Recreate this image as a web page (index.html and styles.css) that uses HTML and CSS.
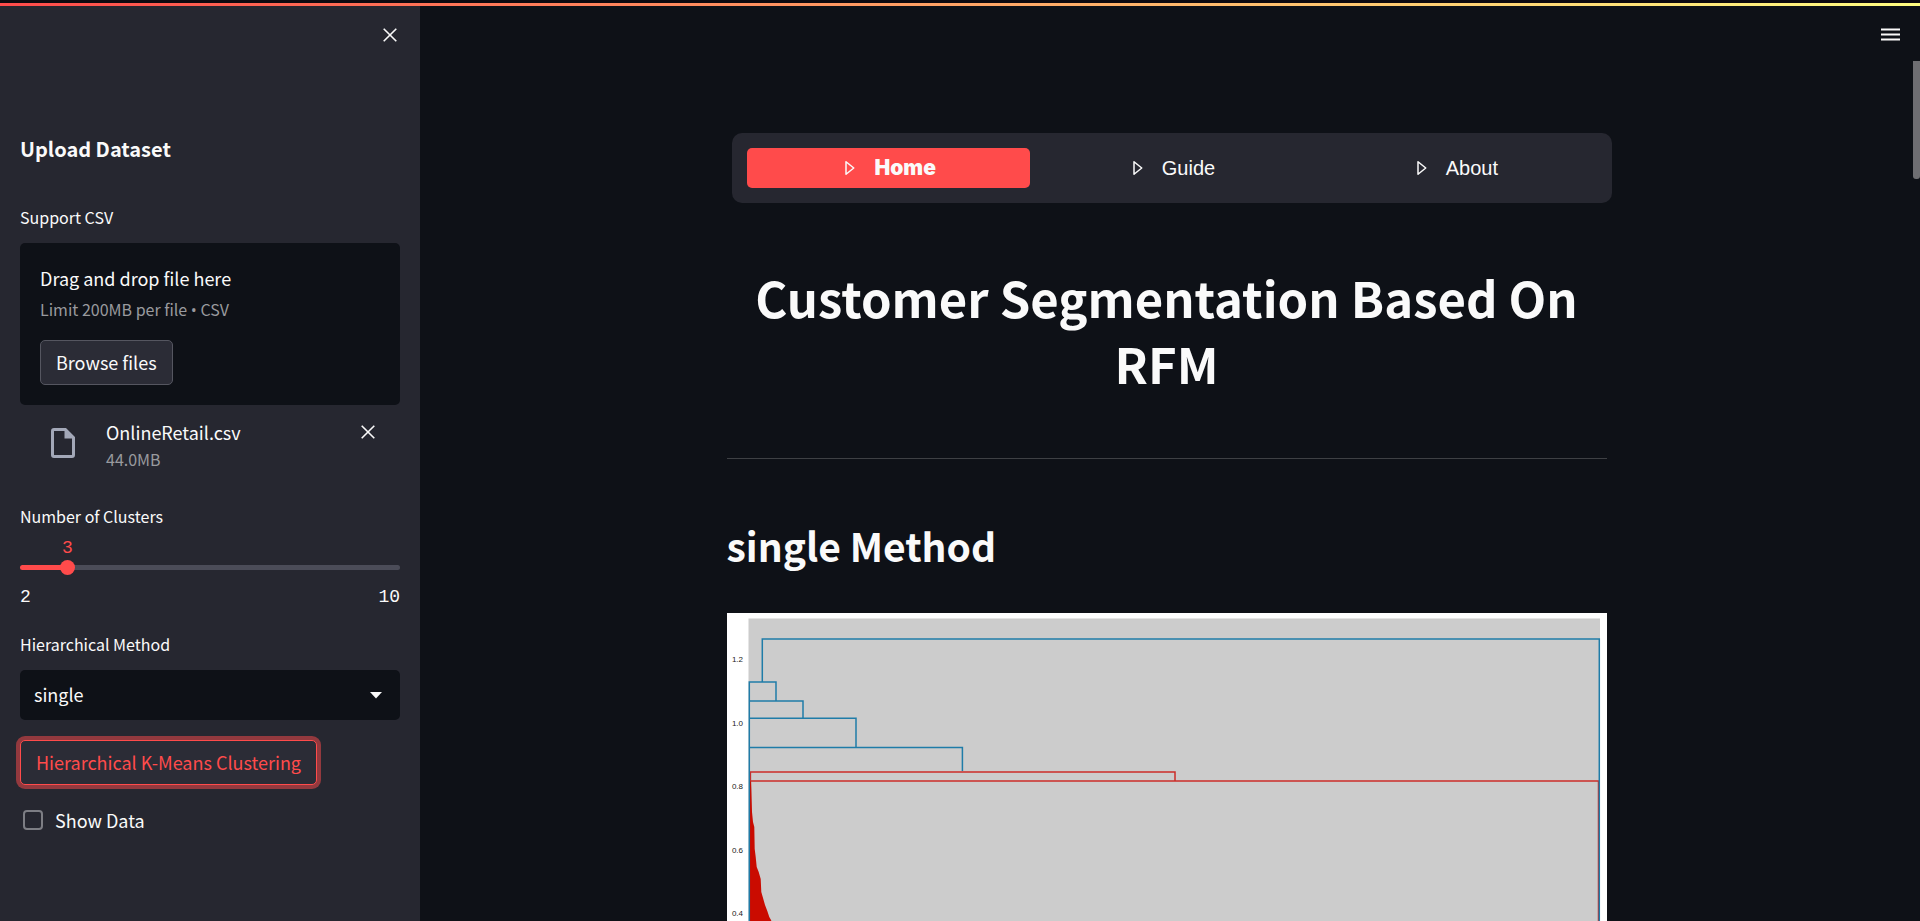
FILE: index.html
```html
<!DOCTYPE html>
<html lang="en">
<head>
<meta charset="utf-8">
<meta name="viewport" content="width=device-width, initial-scale=1">
<title>Customer Segmentation</title>
<link rel="stylesheet" href="styles.css">
</head>
<body>
<div class="decoration"></div>
<div class="app">
  <aside class="sidebar">
    <div class="sidebar-top">
      <button class="icon-button" type="button" aria-label="Close sidebar">
        <svg class="cross" viewBox="0 0 14 14" aria-hidden="true"><path d="M.7.7l12.6 12.6M13.3.7L.7 13.3"/></svg>
      </button>
    </div>
    <h2 class="sidebar-title">Upload Dataset</h2>

    <section class="field">
      <span class="label" id="upload-label">Support CSV</span>
      <div class="dropzone" role="group" aria-labelledby="upload-label">
        <span class="text">Drag and drop file here</span>
        <span class="hint">Limit 200MB per file <span class="bullet">•</span> CSV</span>
        <button class="button" type="button">Browse files</button>
      </div>
      <div class="file">
        <svg class="file-icon" viewBox="0 0 24 30" aria-hidden="true"><path fill-rule="evenodd" d="M3 0h12l9 9v18a3 3 0 0 1-3 3H3a3 3 0 0 1-3-3V3a3 3 0 0 1 3-3zm0 3v24h18V10.500h-7.500V3z"/></svg>
        <div class="file-info">
          <span class="text">OnlineRetail.csv</span>
          <span class="hint">44.0MB</span>
        </div>
        <button class="icon-button" type="button" aria-label="Remove file">
          <svg class="cross" viewBox="0 0 14 14" aria-hidden="true"><path d="M.7.7l12.6 12.6M13.3.7L.7 13.3"/></svg>
        </button>
      </div>
    </section>

    <section class="field slider" style="--value: 12.5%">
      <label class="label" for="clusters">Number of Clusters</label>
      <output class="slider-value" for="clusters">3</output>
      <div class="slider-track"><input class="range" id="clusters" type="range" min="2" max="10" value="3"></div>
      <div class="slider-ends"><span>2</span><span>10</span></div>
    </section>

    <section class="field method">
      <label class="label" for="method">Hierarchical Method</label>
      <div class="select-box">
        <select class="select" id="method"><option>single</option></select>
        <svg class="caret" viewBox="0 0 12 7" aria-hidden="true"><path d="M0 0h12L6 6.500z"/></svg>
      </div>
    </section>

    <button class="button button-active" type="button">Hierarchical K-Means Clustering</button>
    <label class="check"><input class="checkbox" type="checkbox">Show Data</label>
  </aside>

  <main class="main">
    <div class="content">
      <nav class="tabs">
        <a class="tab tab-active" href="#home"><svg class="play" viewBox="0 0 16 16" aria-hidden="true"><path d="M4.800 3v10l6.200-5z"/></svg>Home</a>
        <a class="tab" href="#guide"><svg class="play" viewBox="0 0 16 16" aria-hidden="true"><path d="M4.800 3v10l6.200-5z"/></svg>Guide</a>
        <a class="tab" href="#about"><svg class="play" viewBox="0 0 16 16" aria-hidden="true"><path d="M4.800 3v10l6.200-5z"/></svg>About</a>
      </nav>
      <h1 class="title">Customer Segmentation Based On RFM</h1>
      <hr class="rule">
      <h2 class="heading">single Method</h2>
      <svg class="chart" viewBox="0 0 880 440" role="img" aria-label="Dendrogram, single linkage">
        <rect class="paper" width="880" height="440"/>
        <rect class="plot" x="21.500" y="5.500" width="851.500" height="428"/>
        <g class="ticks">
          <text x="16" y="49">1.2</text>
          <text x="16" y="113">1.0</text>
          <text x="16" y="176">0.8</text>
          <text x="16" y="240">0.6</text>
          <text x="16" y="303">0.4</text>
        </g>
        <path class="link-red" d="M23.400 434V159H448V168M23.400 168H871.500V434"/>
        <path class="mass" d="M23 168L24 169 24.300 176 25 199 26 209 27.300 214 27.700 236 28.700 244 29.700 254 31.700 259 33.700 266 34.300 279 36.300 286 38 292 40.300 298 42.300 304 44 307 56 340 90 380 180 410 400 425 860 434H23z"/>
        <path class="link-blue" d="M35.300 69V26H872.300V434M22.300 434V69H49V88M22.300 88H76V105.300M22.300 105.300H129V134.400M22.300 134.400H235.400V158"/>
      </svg>
    </div>
  </main>
</div>
<button class="menu-button" type="button" aria-label="Main menu">
  <svg class="menu-icon" viewBox="0 0 19 14" aria-hidden="true"><path d="M0 1.500h19M0 6.500h19M0 11.500h19"/></svg>
</button>
<div class="scroll-thumb"></div>
</body>
</html>
```

FILE: styles.css
```css
:root {
  --bg: #0e1117;
  --panel: #262730;
  --text: #fafafa;
  --muted: #999a9e;
  --accent: #ff4b4b;
}

* { box-sizing: border-box; }

body {
  margin: 0;
  height: 100vh;
  overflow: hidden;
  background: var(--bg);
  color: var(--text);
  font: 18px/30px "Noto Sans CJK SC", "Open Sans", sans-serif;
}

button, input, select { font: inherit; color: inherit; margin: 0; }

.decoration {
  position: absolute;
  inset: 0 0 auto;
  z-index: 2;
  height: 6px;
  border-top: 3px solid #0d0a10;
  background: linear-gradient(90deg, #ff4b4b, #fffd80) padding-box;
}

.app { display: flex; height: 100%; }

/* Sidebar */
.sidebar {
  flex: 0 0 420px;
  display: flex;
  flex-direction: column;
  align-items: stretch;
  padding: 20px;
  background: var(--panel);
  overflow: hidden;
}

.sidebar-top { display: flex; justify-content: flex-end; height: 115px; }

.icon-button {
  display: grid;
  place-items: center;
  width: 30px;
  height: 30px;
  padding: 0;
  border: 0;
  background: none;
}

.sidebar-top .icon-button { margin-right: -5px; }

.cross { width: 14px; height: 14px; fill: none; stroke: var(--text); stroke-width: 1.6; }

.sidebar-title {
  margin: 0 0 43px;
  font-size: 20px;
  line-height: 27px;
  font-weight: 700;
}

.field { display: flex; flex-direction: column; }

.label { margin-bottom: 14px; font-size: 16px; line-height: 24px; }

.dropzone {
  display: flex;
  flex-direction: column;
  align-items: flex-start;
  padding: 20px;
  border-radius: 5px;
  background: var(--bg);
}

.hint { font-size: 16px; line-height: 24px; color: var(--muted); }

.dropzone .hint { margin: 4px 0 19px; }

.bullet { font-family: "Open Sans", sans-serif; line-height: 1; }

.button {
  align-self: flex-start;
  height: 45px;
  padding: 0 15px 2px;
  border: 1px solid #555660;
  border-radius: 5px;
  background: #2b2c36;
  line-height: 30px;
}

.file { display: flex; align-items: flex-start; padding: 12px 15px 0 31px; }

.file-icon { width: 24px; height: 30px; margin: 11px 31px 0 0; fill: #a3a8b8; }

.file-info { display: flex; flex-direction: column; flex: 1; }

.file .icon-button { width: 35px; }

.slider { margin-top: 33px; }

.slider .label { margin-bottom: 8px; }

.slider-value, .slider-ends {
  font: 18px/24px "Liberation Mono", monospace;
}

.slider-value {
  align-self: flex-start;
  margin-left: var(--value);
  transform: translateX(-50%);
  color: var(--accent);
}

.slider-track {
  display: flex;
  align-items: center;
  height: 5px;
  margin: 5px 0;
  border-radius: 3px;
  background: linear-gradient(90deg, var(--accent) var(--value), #4b4c58 var(--value));
}

.range {
  flex: 1;
  height: 15px;
  margin: 0 -7px;
  appearance: none;
  background: none;
}

.range::-webkit-slider-thumb {
  appearance: none;
  width: 15px;
  height: 15px;
  border-radius: 50%;
  background: var(--accent);
}

.slider-ends { display: flex; justify-content: space-between; margin-top: 10px; }

.method { margin: 23px 0 20px; }

.select-box { position: relative; display: flex; }

.select {
  flex: 1;
  height: 50px;
  padding: 0 14px 2px;
  appearance: none;
  border: 0;
  border-radius: 5px;
  background: var(--bg);
}

.caret {
  position: absolute;
  right: 18px;
  top: 22px;
  width: 12px;
  height: 7px;
  fill: var(--text);
  pointer-events: none;
}

.button-active {
  border-color: var(--accent);
  color: var(--accent);
  box-shadow: 0 0 0 4px rgba(255, 75, 75, 0.5);
}

.check { display: flex; align-items: center; gap: 12px; margin: 20px 3px; }

.checkbox {
  width: 20px;
  height: 20px;
  appearance: none;
  border: 2px solid #7d7e84;
  border-radius: 4px;
}

/* Main column */
.main { flex: 1; min-width: 0; padding: 133px 7px 0 0; overflow: hidden; }

.content { max-width: 920px; margin: 0 auto; padding: 0 20px; }

.tabs {
  display: flex;
  margin: 0 -5px 61px 5px;
  padding: 15px;
  border-radius: 10px;
  background: var(--panel);
}

.tab {
  flex: 1;
  display: flex;
  align-items: center;
  justify-content: center;
  gap: 14px;
  height: 40px;
  border-radius: 5px;
  color: var(--text);
  font-family: "Liberation Sans", Arial, sans-serif;
  font-size: 20px;
  text-decoration: none;
}

.tab-active { background: var(--accent); font-family: Inter, sans-serif; font-size: 21px; font-weight: 900; }

.play { width: 20px; height: 20px; fill: none; stroke: currentColor; stroke-width: 1.2; stroke-linejoin: round; }

.title {
  margin: 0;
  font-size: 49px;
  line-height: 66px;
  font-weight: 700;
  text-align: center;
}

.rule { height: 1px; margin: 62px 0 59px; border: 0; background: #3e4044; }

.heading { margin: 0 0 41px; font-size: 39px; line-height: 54px; font-weight: 700; }

.chart { display: block; width: 100%; }

.paper { fill: #fff; }
.plot { fill: #ccc; }
.ticks { font: 8px "Liberation Sans", Arial, sans-serif; fill: #222; text-anchor: end; }
.link-blue, .link-red { fill: none; stroke-width: 1.5; }
.link-blue { stroke: #1f7ca8; }
.link-red { stroke: #cb2d28; }
.mass { fill: #ca0b00; }

/* Window chrome */
.menu-button {
  position: absolute;
  top: 20px;
  right: 12px;
  display: grid;
  place-items: center;
  width: 35px;
  height: 30px;
  padding: 0;
  border: 0;
  background: none;
}

.menu-icon { width: 19px; height: 14px; fill: none; stroke: var(--text); stroke-width: 2; }

.scroll-thumb {
  position: absolute;
  top: 61px;
  right: 0;
  width: 7px;
  height: 118px;
  border-radius: 0 0 3px 3px;
  background: #6e6e72;
}
```
